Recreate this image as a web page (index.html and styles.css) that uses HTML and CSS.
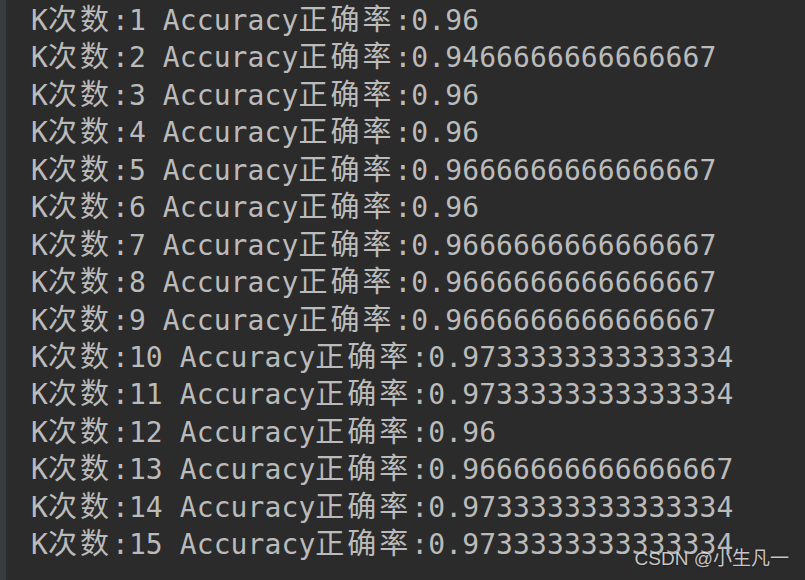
FILE: index.html
```html
<!DOCTYPE html>
<html>
<head>
<meta charset="utf-8">
<link rel="stylesheet" href="styles.css">
</head>
<body>
<div class="console">
  <div class="gutter"></div>
  <div class="output">
    <div class="line">K<span class="cjk">次数</span>:1 Accuracy<span class="cjk">正确率</span>:0.96</div>
    <div class="line">K<span class="cjk">次数</span>:2 Accuracy<span class="cjk">正确率</span>:0.9466666666666667</div>
    <div class="line">K<span class="cjk">次数</span>:3 Accuracy<span class="cjk">正确率</span>:0.96</div>
    <div class="line">K<span class="cjk">次数</span>:4 Accuracy<span class="cjk">正确率</span>:0.96</div>
    <div class="line">K<span class="cjk">次数</span>:5 Accuracy<span class="cjk">正确率</span>:0.9666666666666667</div>
    <div class="line">K<span class="cjk">次数</span>:6 Accuracy<span class="cjk">正确率</span>:0.96</div>
    <div class="line">K<span class="cjk">次数</span>:7 Accuracy<span class="cjk">正确率</span>:0.9666666666666667</div>
    <div class="line">K<span class="cjk">次数</span>:8 Accuracy<span class="cjk">正确率</span>:0.9666666666666667</div>
    <div class="line">K<span class="cjk">次数</span>:9 Accuracy<span class="cjk">正确率</span>:0.9666666666666667</div>
    <div class="line">K<span class="cjk">次数</span>:10 Accuracy<span class="cjk">正确率</span>:0.9733333333333334</div>
    <div class="line">K<span class="cjk">次数</span>:11 Accuracy<span class="cjk">正确率</span>:0.9733333333333334</div>
    <div class="line">K<span class="cjk">次数</span>:12 Accuracy<span class="cjk">正确率</span>:0.96</div>
    <div class="line">K<span class="cjk">次数</span>:13 Accuracy<span class="cjk">正确率</span>:0.9666666666666667</div>
    <div class="line">K<span class="cjk">次数</span>:14 Accuracy<span class="cjk">正确率</span>:0.9733333333333334</div>
    <div class="line">K<span class="cjk">次数</span>:15 Accuracy<span class="cjk">正确率</span>:0.9733333333333334</div>
  </div>
  <div class="watermark">CSDN @小生凡一</div>
</div>
</body>
</html>
```
FILE: styles.css
```css
html, body {
  margin: 0;
  padding: 0;
  background: #2b2b2b;
}
.console {
  position: relative;
  display: flex;
  width: 805px;
  height: 580px;
  overflow: hidden;
  background: #2b2b2b;
}
.gutter {
  width: 6px;
  flex: none;
  background: #393c3e;
}
.output {
  padding: 2px 0 0 25px;
  color: #bbbbbb;
  font-family: "DejaVu Sans Mono", "Noto Sans CJK SC", monospace;
  font-size: 28px;
}
.line {
  height: 37.45px;
  line-height: 37.45px;
  white-space: pre;
  letter-spacing: 0.09px;
}
.cjk {
  font-family: "Noto Sans CJK SC", sans-serif;
  font-size: 29px;
  line-height: 29px;
  letter-spacing: 3px;
}
.watermark {
  position: absolute;
  right: 16px;
  bottom: 10px;
  font-family: "Liberation Sans", "Noto Sans CJK SC", sans-serif;
  font-size: 19px;
  color: rgba(255, 255, 255, 0.75);
  text-shadow: 0 0 2px rgba(0, 0, 0, 0.6);
}
```
